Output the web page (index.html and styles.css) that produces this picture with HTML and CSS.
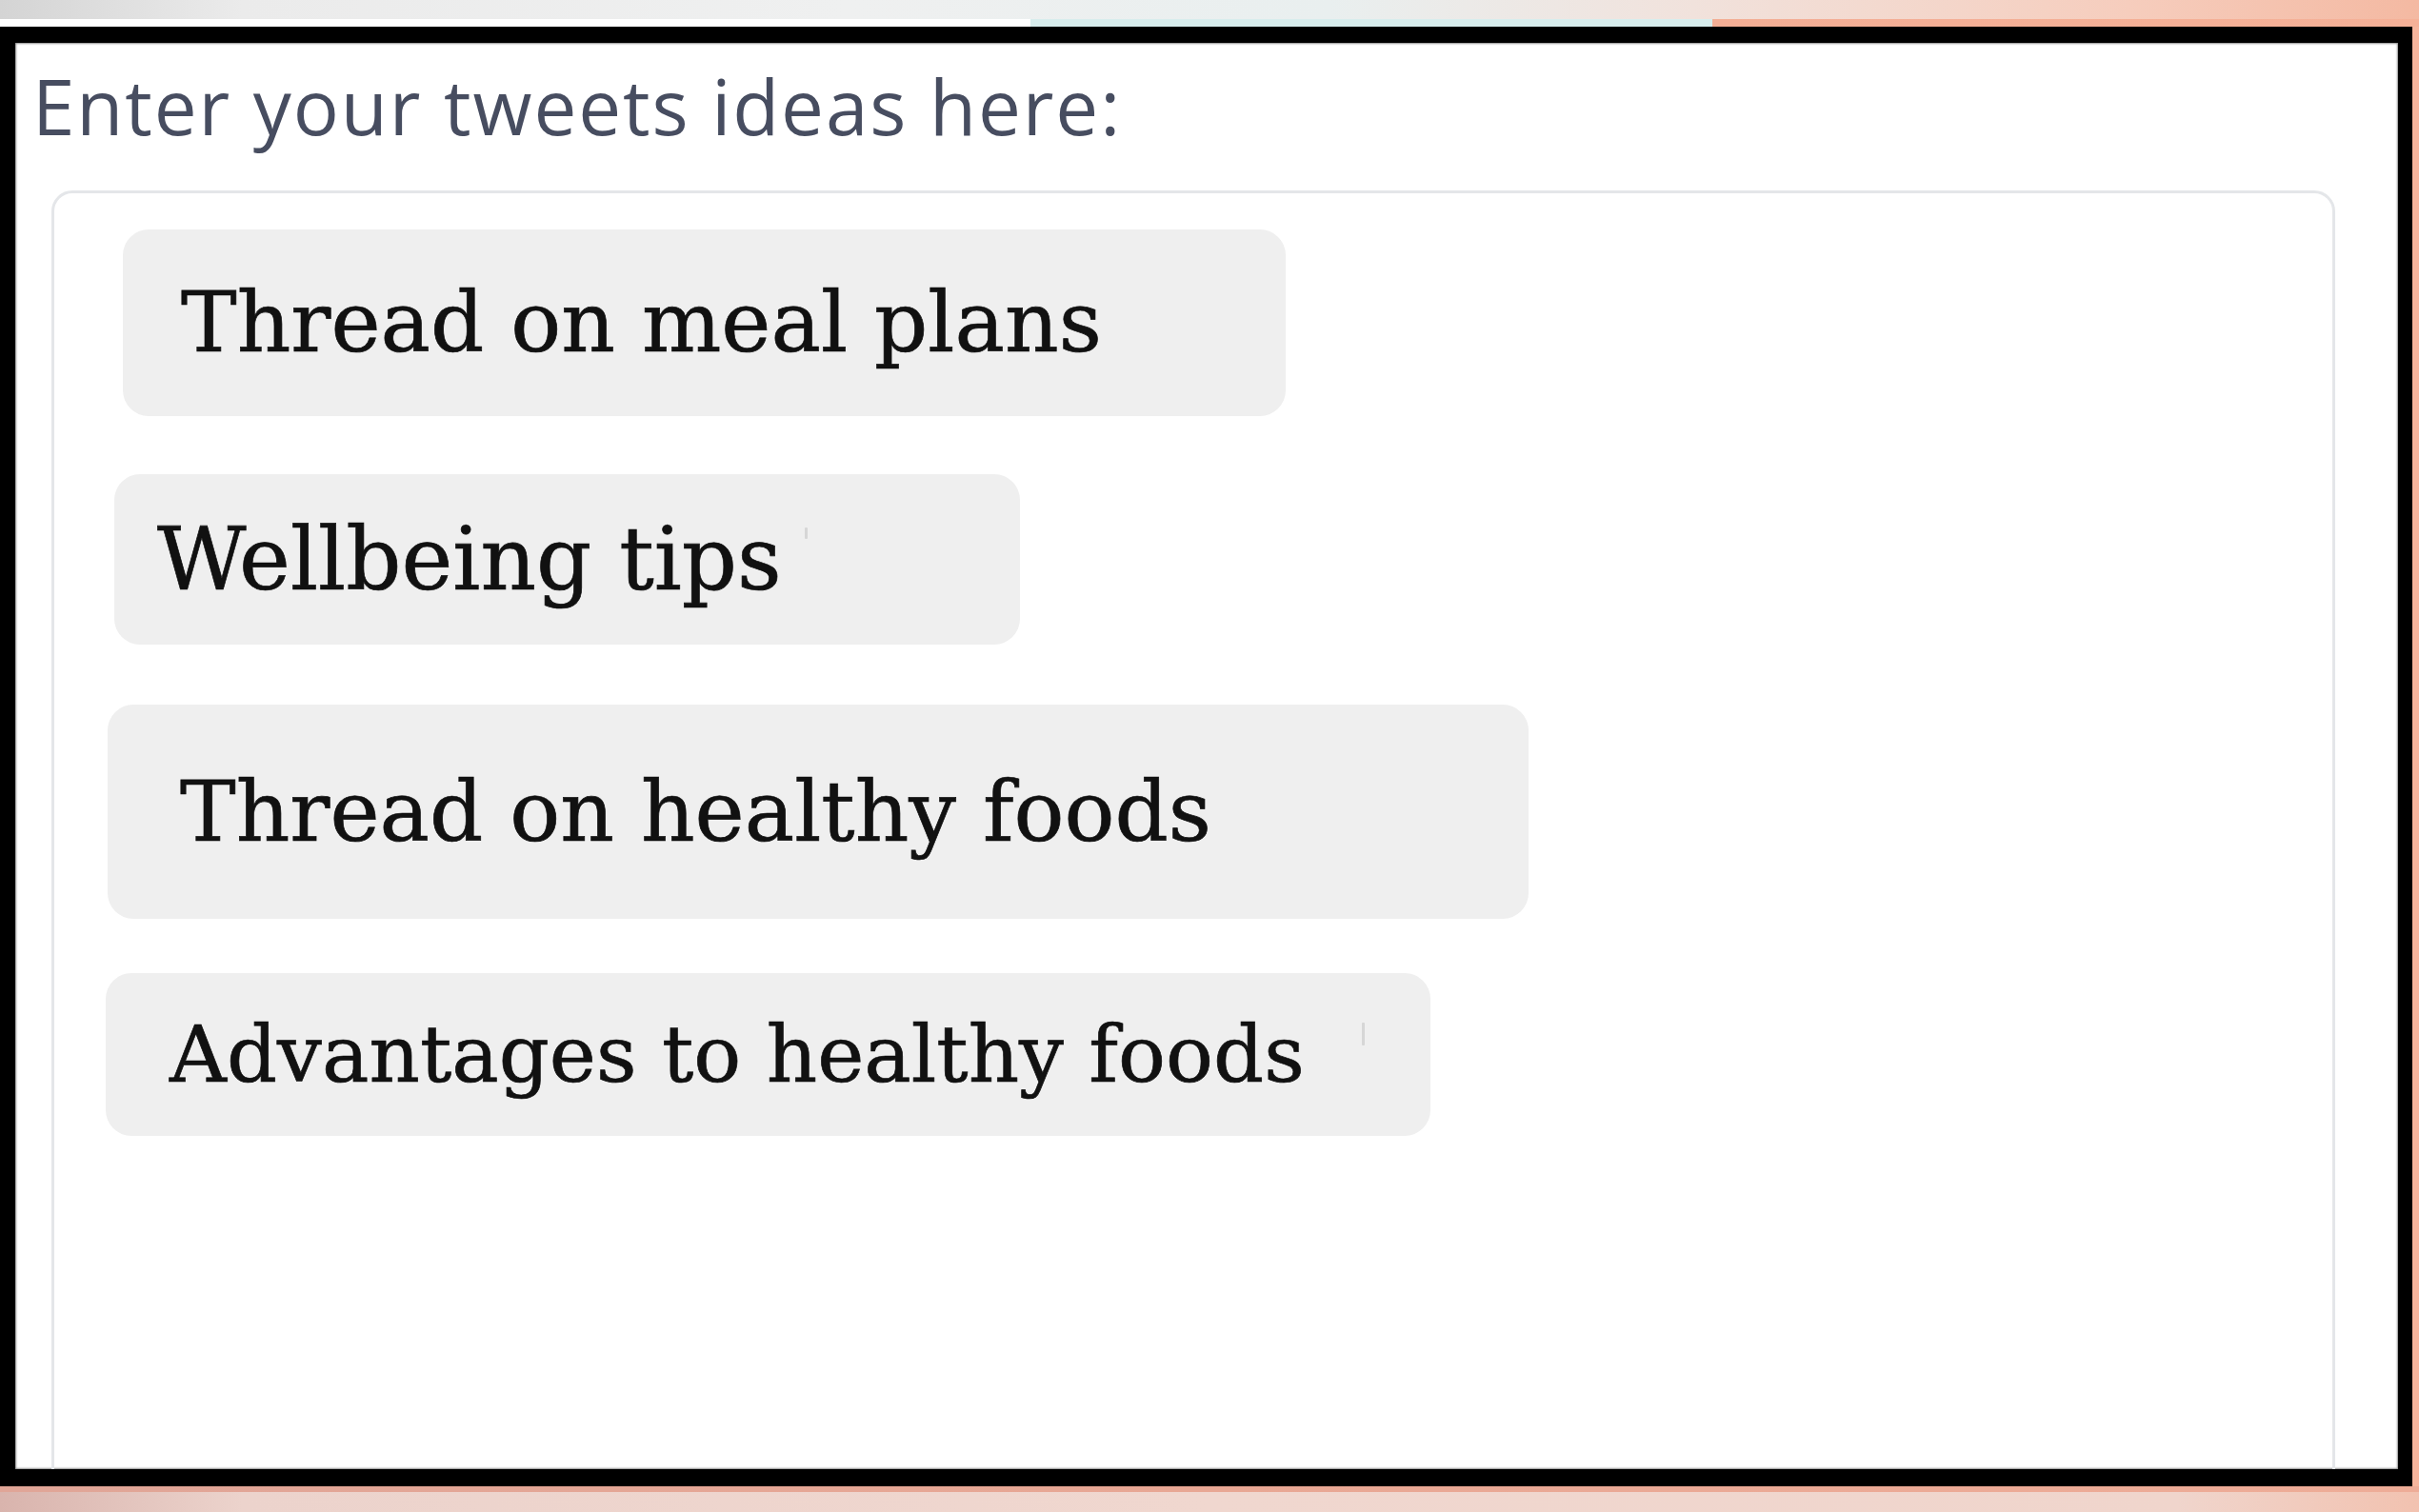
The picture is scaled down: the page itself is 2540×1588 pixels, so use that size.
FILE: index.html
```html
<!DOCTYPE html>
<html lang="en">
<head>
<meta charset="utf-8">
<title>Tweet ideas</title>
<link rel="stylesheet" href="styles.css">
</head>
<body>
<div class="page">
  <div class="top-strip"></div>
  <div class="top-band">
    <div class="band-white"></div>
    <div class="band-cyan"></div>
    <div class="band-salmon"></div>
  </div>
  <div class="frame-row">
    <div class="frame">
      <div class="label">Enter your tweets ideas here:</div>
      <div class="ideas">
        <div class="chip chip-1"><span class="chip-text">Thread on meal plans</span></div>
        <div class="chip chip-2"><span class="chip-text">Wellbeing tips</span><span class="caret caret-2"></span></div>
        <div class="chip chip-3"><span class="chip-text">Thread on healthy foods</span></div>
        <div class="chip chip-4"><span class="chip-text">Advantages to healthy foods</span><span class="caret caret-4"></span></div>
      </div>
    </div>
  </div>
  <div class="bottom-band"></div>
  <div class="bottom-strip"></div>
</div>
</body>
</html>
```

FILE: styles.css
```css
html, body {
  margin: 0;
  padding: 0;
}

body {
  width: 2540px;
  height: 1588px;
  overflow: hidden;
  background: #f0d6ce;
}

.page {
  width: 2540px;
  height: 1588px;
  display: flex;
  flex-direction: column;
}

.top-strip {
  height: 20px;
  flex: none;
  background: linear-gradient(90deg, #d4d4d4 0%, #ebebeb 10%, #eff0f0 35%, #e9efef 55%, #f1e2dc 70%, #f6cdbd 88%, #f4b9a2 100%);
}

.top-band {
  height: 8px;
  flex: none;
  display: flex;
}

.band-white {
  width: 1082px;
  background: #ffffff;
}

.band-cyan {
  width: 716px;
  background: #d8eded;
}

.band-salmon {
  flex: 1;
  background: linear-gradient(90deg, #f3ae95, #f5b198);
}

.frame-row {
  flex: none;
  display: flex;
  background: #f6b59d;
}

.frame {
  box-sizing: border-box;
  width: 2533px;
  height: 1533px;
  border-style: solid;
  border-color: #000000;
  border-width: 17px 15px 18px 16px;
  background: #ffffff;
  box-shadow: inset 0 0 2px 1px #8a8a8a;
  overflow: hidden;
  padding: 26px 0 0 18px;
}

.label {
  font-family: "Open Sans", "Noto Sans", sans-serif;
  font-size: 80px;
  line-height: 80px;
  letter-spacing: 1.9px;
  color: #474d60;
  white-space: nowrap;
}

.ideas {
  box-sizing: border-box;
  margin: 49px 0 0 20px;
  width: 2398px;
  height: 1450px;
  border: 3px solid #e4e6e9;
  border-radius: 22px;
  padding-top: 38px;
  display: flex;
  flex-direction: column;
  align-items: flex-start;
}

.chip {
  box-sizing: border-box;
  display: flex;
  align-items: center;
  background: #efefef;
  border-radius: 27px;
  font-family: "DejaVu Serif", "Liberation Serif", serif;
  color: #111111;
  line-height: 1;
  white-space: nowrap;
}

.chip-text {
  -webkit-text-stroke: 0.7px #111111;
}

.chip-1 {
  margin-left: 72px;
  width: 1221px;
  height: 196px;
  padding-left: 61px;
  font-size: 88px;
}

.chip-2 {
  margin-left: 63px;
  margin-top: 61px;
  width: 951px;
  height: 179px;
  padding-left: 45px;
  font-size: 91px;
}

.chip-3 {
  margin-left: 56px;
  margin-top: 63px;
  width: 1492px;
  height: 225px;
  padding-left: 76px;
  font-size: 88px;
}

.chip-4 {
  margin-left: 54px;
  margin-top: 57px;
  width: 1391px;
  height: 171px;
  padding-left: 67px;
  font-size: 83px;
}

.caret {
  width: 3px;
  background: #d6d6d6;
  border-radius: 1px;
}

.caret-2 {
  height: 12px;
  margin-left: 24px;
  margin-bottom: 56px;
}

.caret-4 {
  height: 24px;
  margin-left: 60px;
  margin-bottom: 44px;
}

.bottom-band {
  height: 6px;
  flex: none;
  background: linear-gradient(90deg, #e0a597, #e8a794 50%, #eeac97);
}

.bottom-strip {
  flex: 1;
  background: linear-gradient(90deg, #d9b4ad 0%, #ecd3cc 10%, #f0d7cf 50%, #f0d5cc 90%, #f2c2b0 100%);
}
```
